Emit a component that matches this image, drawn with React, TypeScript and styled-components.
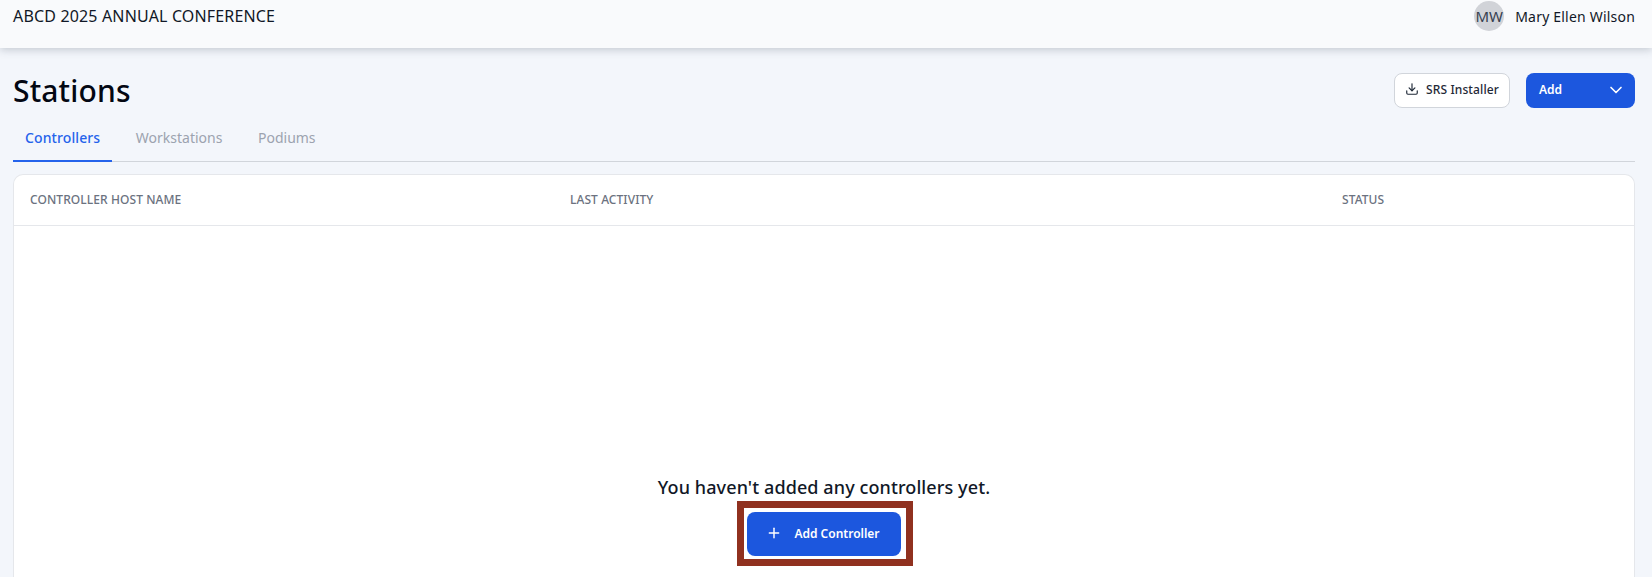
import React from 'react';
import styled, { createGlobalStyle } from 'styled-components';
import { ChevronDown, Download, Plus } from 'lucide-react';

const GlobalStyle = createGlobalStyle`
  html, body {
    margin: 0;
    height: 100%;
    overflow: hidden;
    background: #f3f6fb;
    font-family: "Noto Sans", "Open Sans", sans-serif;
  }
  * { box-sizing: border-box; }
`;

const Page = styled.div`
  height: 577px;
  overflow: hidden;
`;

const TopBar = styled.header`
  height: 48px;
  padding: 0 17px 0 13px;
  display: flex;
  justify-content: space-between;
  align-items: flex-start;
  background: #f9fafc;
  box-shadow: 0 2px 8px rgba(60, 70, 90, 0.25);
`;

const EventName = styled.div`
  font-size: 16px;
  letter-spacing: 0.16px;
  line-height: 32px;
  color: #111827;
`;

const User = styled.div`
  display: flex;
  align-items: center;
  gap: 11px;
  height: 32px;
`;

const Avatar = styled.div`
  width: 30px;
  height: 30px;
  border-radius: 50%;
  background: #d1d3d8;
  color: #374151;
  font-size: 15px;
  display: flex;
  align-items: center;
  justify-content: center;
`;

const UserName = styled.span`
  font-size: 14px;
  letter-spacing: 0.2px;
  color: #111827;
`;

const Content = styled.main`
  padding: 25px 17px 0 13px;
`;

const TitleRow = styled.div`
  display: flex;
  justify-content: space-between;
  align-items: center;
  height: 35px;
`;

const Title = styled.h1`
  margin: 0;
  font-size: 30px;
  letter-spacing: 0.15px;
  font-weight: 500;
  color: #030712;
`;

const Actions = styled.div`
  display: flex;
  gap: 16px;
`;

const OutlineButton = styled.button`
  width: 116px;
  height: 35px;
  padding: 0 0 3px;
  display: flex;
  align-items: center;
  justify-content: center;
  gap: 7px;
  background: #fff;
  border: 1px solid #d1d5db;
  border-radius: 8px;
  font: 500 12px "Noto Sans", sans-serif;
  letter-spacing: 0.12px;
  color: #1f2937;
`;

const AddButton = styled.button`
  width: 109px;
  height: 35px;
  padding: 0 9px 2px 13px;
  display: flex;
  align-items: center;
  justify-content: space-between;
  background: #1c57de;
  border: none;
  border-radius: 8px;
  font: 600 12px "Noto Sans", sans-serif;
  color: #fff;
`;

const Tabs = styled.nav`
  display: flex;
  margin-top: 13px;
  height: 41px;
  border-bottom: 1px solid #d1d5db;
`;

const Tab = styled.div<{ $active?: boolean }>`
  height: 41px;
  padding: 0 12px;
  margin-right: 11.6px;
  font-size: 14px;
  letter-spacing: ${(p) => (p.$active ? '0.1px' : '0')};
  font-weight: ${(p) => (p.$active ? 500 : 400)};
  line-height: 33px;
  color: ${(p) => (p.$active ? '#2563eb' : '#9ca3af')};
  border-bottom: 2px solid ${(p) => (p.$active ? '#2563eb' : 'transparent')};
`;

const Card = styled.section`
  margin-top: 12px;
  background: #fff;
  border: 1px solid #e5e7eb;
  border-bottom: none;
  border-radius: 10px 10px 0 0;
  height: 420px;
`;

const TableHead = styled.div`
  height: 51px;
  padding: 0 0 2px 16px;
  display: grid;
  grid-template-columns: 540px 772px 1fr;
  align-items: center;
  border-bottom: 1px solid #e5e7eb;
`;

const HeadCell = styled.div`
  font-size: 12px;
  letter-spacing: 0.08px;
  font-weight: 500;
  color: #6b7280;
`;

const Empty = styled.div`
  padding-top: 248px;
  display: flex;
  flex-direction: column;
  align-items: center;
`;

const EmptyText = styled.p`
  margin: 0 0 1px;
  font-size: 18px;
  letter-spacing: 0.1px;
  font-weight: 500;
  line-height: 26px;
  color: #111827;
`;

const Highlight = styled.div`
  width: 176px;
  height: 65px;
  margin-left: 2px;
  border: 7px solid #90311f;
  padding: 4px 3px;
  display: flex;
`;

const PrimaryButton = styled.button`
  width: 154px;
  height: 44px;
  padding: 0 2px 2px 0;
  display: flex;
  align-items: center;
  justify-content: center;
  gap: 12px;
  background: #1c57de;
  border: none;
  border-radius: 8px;
  font: 600 12px "Noto Sans", sans-serif;
  color: #fff;
`;

const App = () => (
  <Page>
    <GlobalStyle />
    <TopBar>
      <EventName>ABCD 2025 ANNUAL CONFERENCE</EventName>
      <User>
        <Avatar>MW</Avatar>
        <UserName>Mary Ellen Wilson</UserName>
      </User>
    </TopBar>
    <Content>
      <TitleRow>
        <Title>Stations</Title>
        <Actions>
          <OutlineButton>
            <Download size={14} />
            SRS Installer
          </OutlineButton>
          <AddButton>
            Add
            <ChevronDown size={20} />
          </AddButton>
        </Actions>
      </TitleRow>
      <Tabs>
        <Tab $active>Controllers</Tab>
        <Tab>Workstations</Tab>
        <Tab>Podiums</Tab>
      </Tabs>
      <Card>
        <TableHead>
          <HeadCell>CONTROLLER HOST NAME</HeadCell>
          <HeadCell>LAST ACTIVITY</HeadCell>
          <HeadCell>STATUS</HeadCell>
        </TableHead>
        <Empty>
          <EmptyText>You haven't added any controllers yet.</EmptyText>
          <Highlight>
            <PrimaryButton>
              <Plus size={16} strokeWidth={2.2} />
              Add Controller
            </PrimaryButton>
          </Highlight>
        </Empty>
      </Card>
    </Content>
  </Page>
);

export default App;
